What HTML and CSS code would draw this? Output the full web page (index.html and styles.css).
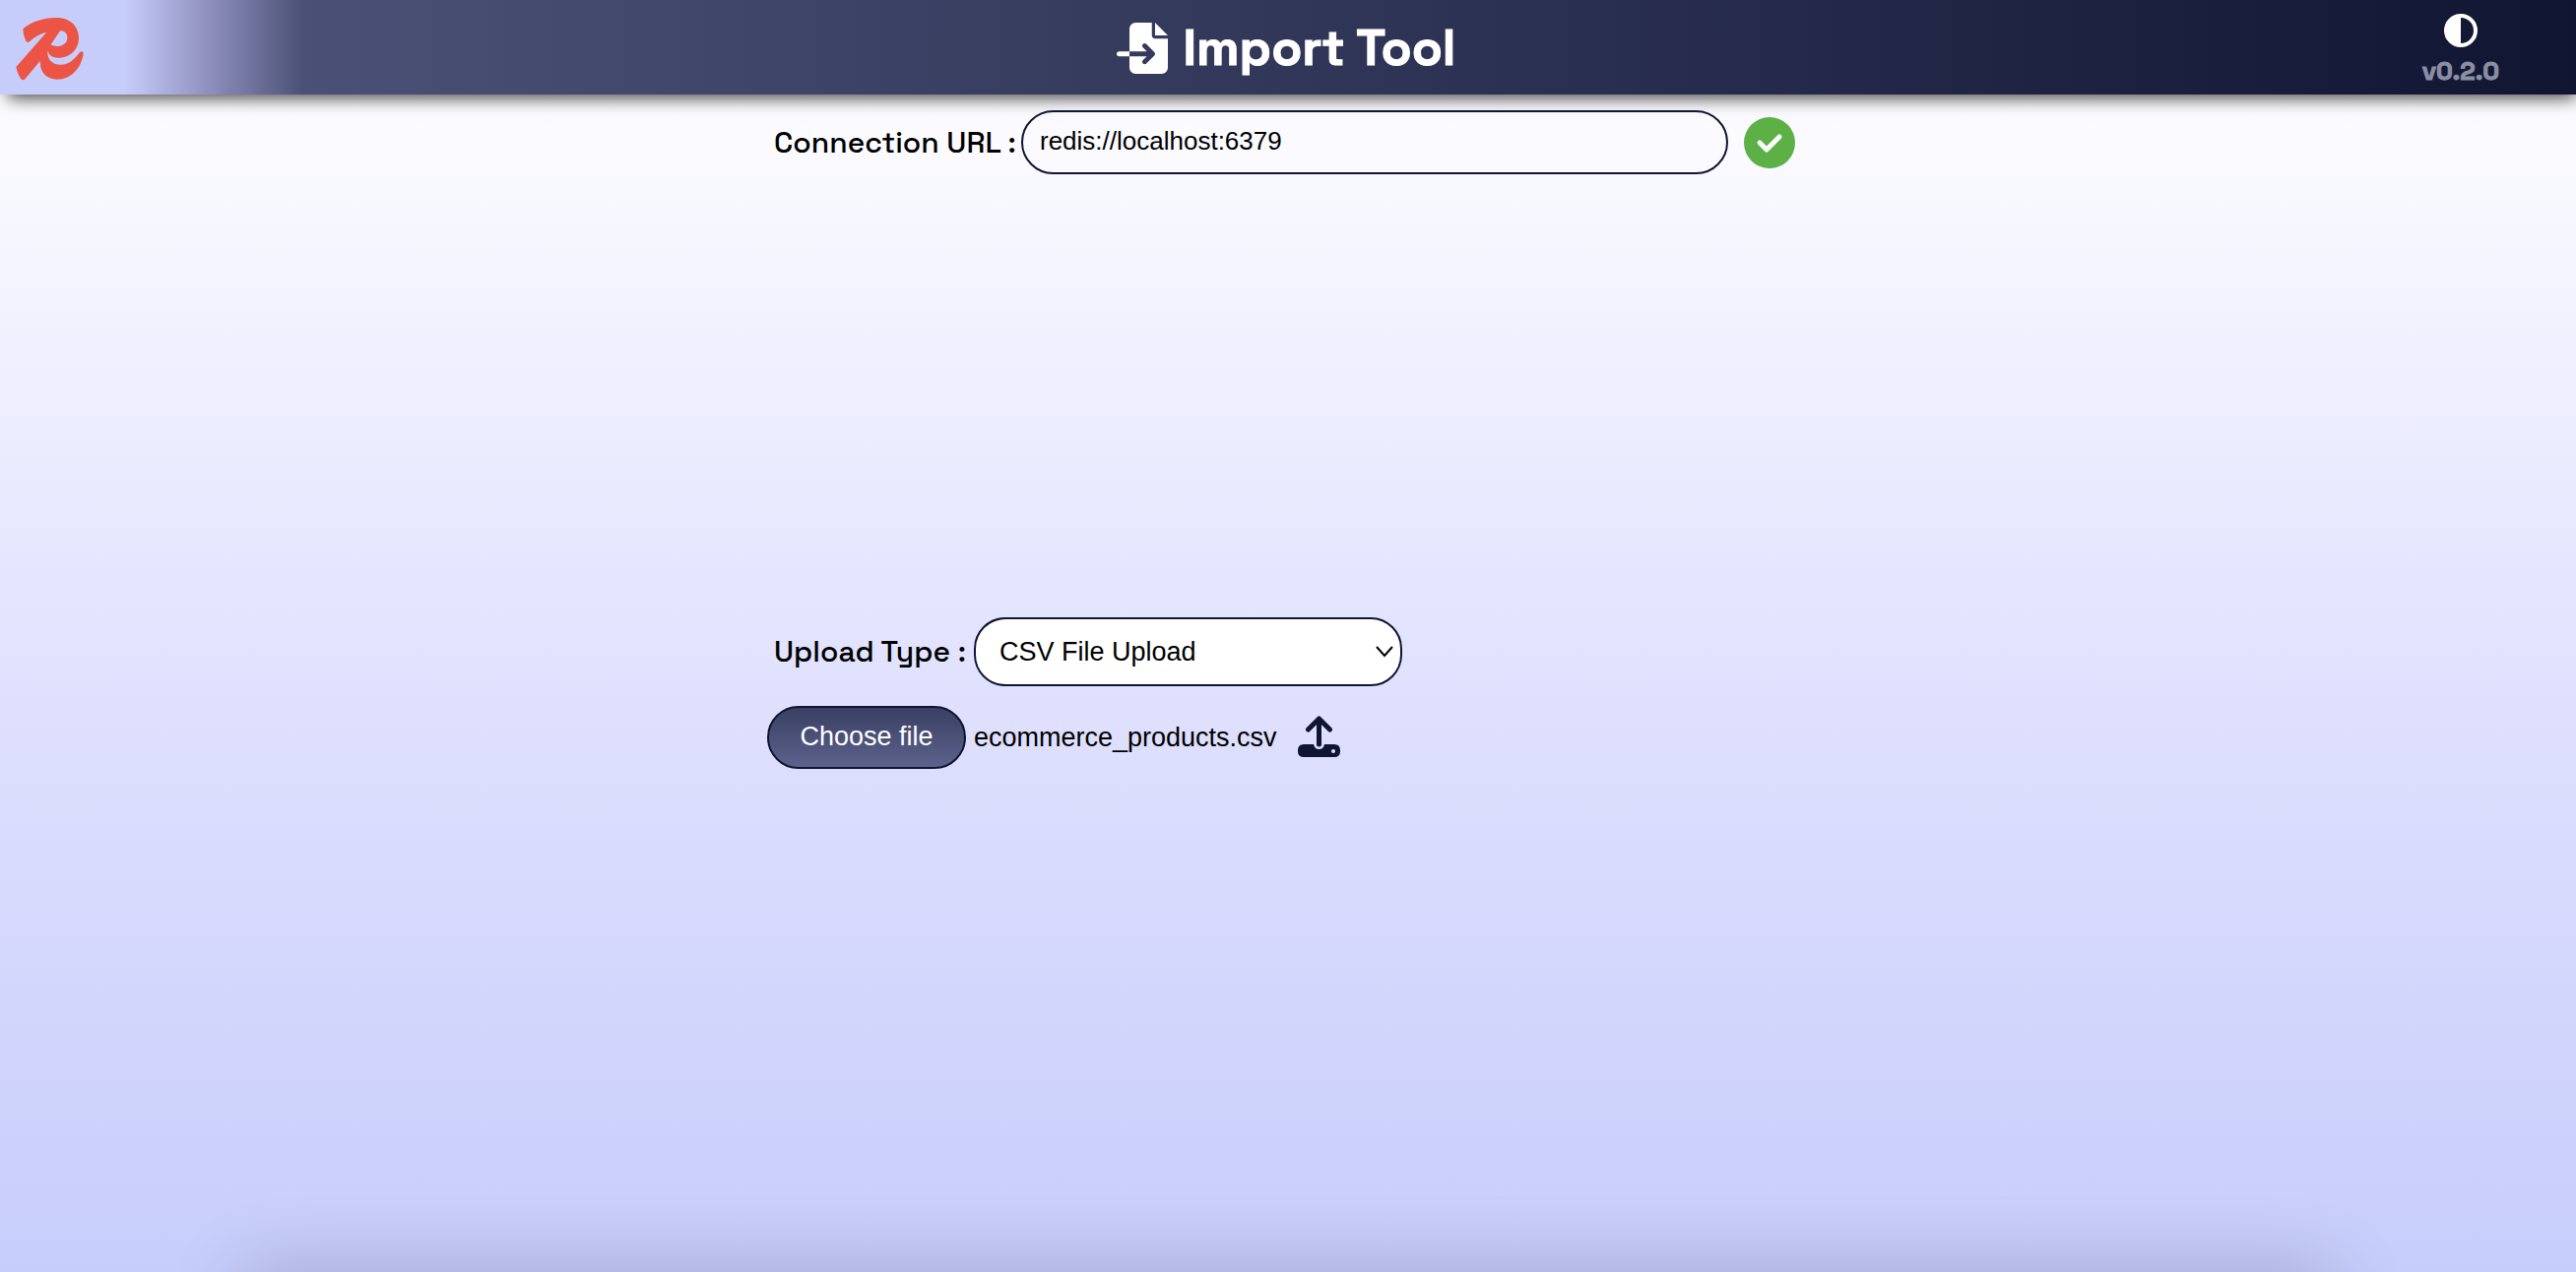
FILE: index.html
```html
<!DOCTYPE html>
<html lang="en">
<head>
  <meta charset="utf-8">
  <meta name="viewport" content="width=device-width, initial-scale=1">
  <title>Import Tool</title>
  <link rel="stylesheet" href="styles.css">
</head>
<body>
  <header class="topbar">
    <a class="logo" href="#" aria-label="Home">
      <svg viewBox="48 46 208 194" aria-hidden="true">
        <path fill="#ec5545" fill-rule="evenodd" d="M70 82C95 60 133 48 170 48C212 46 241 73 241 110C241 147 212 171 180 171C161 171 149 164 146 149C142 176 162 192 185 192C212 192 229 173 243 155Q248 149 253 152Q256 155 254 164C246 204 217 237 175 237C140 237 121 213 123 180L77 235Q69 244 62 233Q52 218 49 199L143 92C122 97 104 109 90 121Q83 127 78 117Q70 100 70 82ZM184 88L155 131C177 141 206 133 206 108C206 96 197 88 184 88Z"/>
      </svg>
    </a>
    <h1 class="title">
      <svg class="title-icon" viewBox="0 0 512 512" aria-hidden="true">
        <path fill="currentColor" d="M128 64c0-35.300 28.700-64 64-64H352V128c0 17.700 14.300 32 32 32H512V448c0 35.300-28.700 64-64 64H192c-35.300 0-64-28.700-64-64V336H302.100l-39 39c-9.400 9.400-9.400 24.600 0 33.900s24.600 9.400 33.900 0l80-80c9.400-9.400 9.400-24.600 0-33.900l-80-80c-9.400-9.400-24.600-9.400-33.900 0s-9.400 24.600 0 33.900l39 39H128V64zm0 224v48H24c-13.300 0-24-10.700-24-24s10.700-24 24-24H128zM512 128H384V0L512 128z"/>
      </svg>
      Import Tool
    </h1>
    <div class="meta">
      <button class="icon-button theme" type="button" aria-label="Toggle theme">
        <svg viewBox="0 0 34 34" aria-hidden="true">
          <circle cx="17" cy="17" r="15" fill="none" stroke="currentColor" stroke-width="4"/>
          <path fill="currentColor" d="M17 1A16 16 0 0 0 17 33Z"/>
        </svg>
      </button>
      <span class="version">v0.2.0</span>
    </div>
  </header>

  <main class="content">
    <form class="connection">
      <label class="label label-url" for="url">Connection URL :</label>
      <input class="url" id="url" type="text" value="redis://localhost:6379">
      <svg class="status" viewBox="0 0 52 52" role="img" aria-label="Connected">
        <circle cx="26" cy="26" r="26" fill="#5cb046"/>
        <path d="M16 26L23 33L36 20" fill="none" stroke="#fff" stroke-width="5" stroke-linecap="round" stroke-linejoin="round"/>
      </svg>
    </form>

    <form class="upload">
      <div class="row">
        <label class="label label-type" for="type">Upload Type :</label>
        <div class="select-box">
          <select class="type" id="type">
            <option>CSV File Upload</option>
          </select>
          <svg class="chevron" viewBox="0 0 20 14" aria-hidden="true">
            <path d="M2 2L10 11L18 2" fill="none" stroke="#000" stroke-width="2"/>
          </svg>
        </div>
      </div>
      <div class="row">
        <button class="choose" type="button">Choose file</button>
        <span class="filename">ecommerce_products.csv</span>
        <button class="icon-button send" type="submit" aria-label="Upload">
          <svg viewBox="0 0 43 44" aria-hidden="true">
            <path fill="currentColor" fill-rule="evenodd" d="M6 29H16Q17 34 21.500 34T27 29H37Q43 29 43 35V36Q43 42 37 42H6Q0 42 0 36V35Q0 29 6 29ZM36 34A2 2 0 0 0 36 38A2 2 0 0 0 36 34Z"/>
            <path d="M21.500 29V4M10.500 14L21.500 3L32.500 14" fill="none" stroke="currentColor" stroke-width="5" stroke-linecap="round" stroke-linejoin="round"/>
          </svg>
        </button>
      </div>
    </form>
  </main>
  <footer class="dock"></footer>
</body>
</html>
```
FILE: styles.css
```css
* {
  box-sizing: border-box;
}

body {
  display: flex;
  flex-direction: column;
  min-height: 100vh;
  margin: 0;
  overflow: hidden;
  font-family: "Liberation Sans", Arial, sans-serif;
  font-size: 27px;
  color: #000;
  background: linear-gradient(#fff 0%, #fbfbff 10%, #e0e1fe 54%, #c7cdfb 100%);
}

svg {
  display: block;
}

.topbar {
  display: grid;
  grid-template-columns: 1fr auto 1fr;
  align-items: center;
  height: 96px;
  padding: 2px 78px 0 16px;
  color: #fff;
  background: linear-gradient(90deg, #c7cdfb 0, #c7cdfb 126px, #9192c0 208px, #4b5176 308px, #101532 100%);
  box-shadow: 4px 8px 16px -4px rgba(0, 0, 0, 0.7);
}

.logo {
  justify-self: start;
}

.logo svg {
  width: 69px;
  height: 65px;
}

.title {
  display: flex;
  align-items: center;
  gap: 16px;
  margin: 0 0 0 58px;
  font-family: "Space Grotesk", Inter, sans-serif;
  font-size: 51px;
  font-weight: 700;
  line-height: 64px;
  -webkit-text-stroke: 1px currentColor;
}

.title-icon {
  width: 52px;
  height: 52px;
}

.meta {
  display: flex;
  flex-direction: column;
  align-items: center;
  justify-self: end;
  gap: 8px;
  padding-top: 4px;
}

.icon-button {
  padding: 0;
  border: 0;
  color: inherit;
  background: none;
}

.theme svg {
  width: 34px;
  height: 34px;
}

.version {
  font-family: "Space Grotesk", Inter, sans-serif;
  font-size: 26px;
  font-weight: 700;
  line-height: 32px;
  color: #8b8fa3;
  -webkit-text-stroke: 1px currentColor;
}

.content {
  width: 100%;
  max-width: 1058px;
  margin: 0 auto;
  padding-top: 16px;
}

.connection,
.row {
  display: flex;
  align-items: center;
}

.label {
  flex: none;
  padding-left: 7px;
  font-family: "Space Grotesk", Inter, sans-serif;
  font-size: 30px;
  font-weight: 500;
  line-height: 36px;
  white-space: nowrap;
}

.label-url {
  width: 258px;
}

.label-type {
  width: 210px;
}

.url {
  flex: 1;
  max-width: 718px;
  height: 65px;
  padding: 0 17px 2px;
  border: 2px solid #101532;
  border-radius: 33px;
  font: inherit;
  font-size: 26px;
  color: inherit;
  background: transparent;
}

.status {
  flex: none;
  width: 52px;
  height: 52px;
  margin-left: 16px;
}

.upload {
  display: flex;
  flex-direction: column;
  gap: 20px;
  margin-top: 450px;
}

.select-box {
  position: relative;
  width: 435px;
}

.type {
  width: 100%;
  height: 70px;
  padding: 0 48px 0 24px;
  appearance: none;
  border: 2px solid #101532;
  border-radius: 32px;
  font: inherit;
  color: inherit;
  background: #fff;
}

.chevron {
  position: absolute;
  top: 28px;
  right: 8px;
  width: 20px;
  height: 14px;
  pointer-events: none;
}

.choose {
  width: 202px;
  height: 64px;
  padding: 0 0 2px;
  border: 2px solid #101532;
  border-radius: 32px;
  font: inherit;
  color: #fff;
  background: linear-gradient(#3a3f63, #5d628c);
}

.filename {
  margin-left: 8px;
}

.send {
  margin-left: 21px;
  color: #101532;
}

.send svg {
  width: 43px;
  height: 44px;
}

.dock {
  width: 78%;
  margin: auto auto 0;
  box-shadow: 0 40px 80px 40px rgba(0, 0, 0, 0.2);
}
```
